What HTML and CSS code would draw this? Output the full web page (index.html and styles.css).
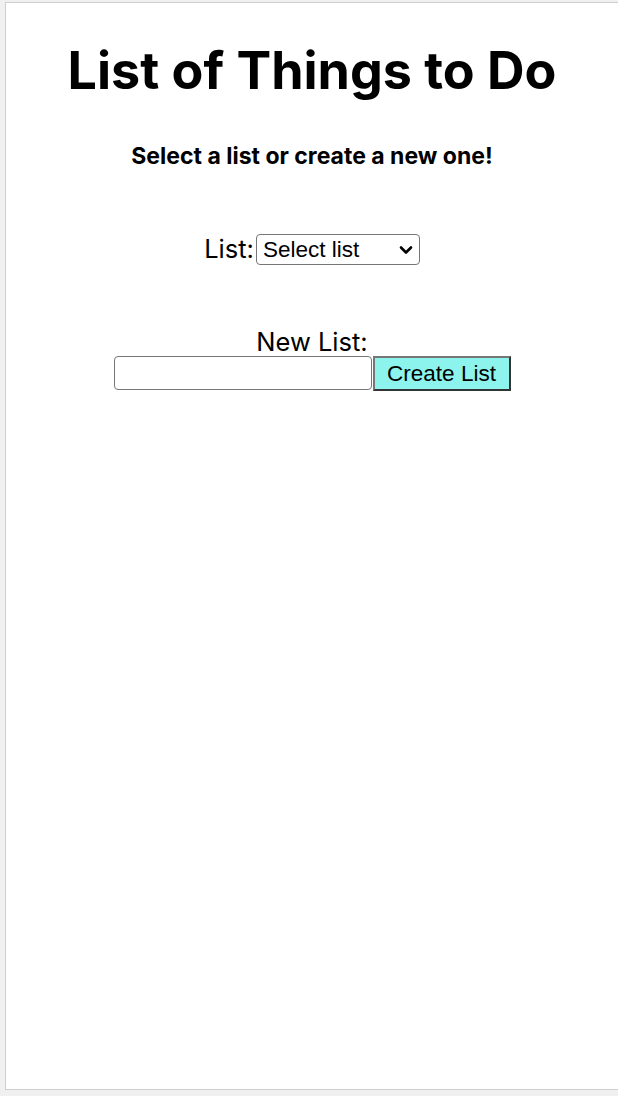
FILE: index.html
```html
<!DOCTYPE html>
<html>
<head>
<meta charset="utf-8">
<link rel="stylesheet" href="styles.css">
</head>
<body>
<div class="frame">
  <h1 class="title">List of Things to Do</h1>
  <h3 class="subtitle">Select a list or create a new one!</h3>
  <div class="row select-row">
    <label class="label" for="list">List:</label>
    <span class="select-wrap">
      <select id="list" class="select"><option>Select list</option></select>
      <svg class="chevron" width="14" height="10" viewBox="0 0 14 10" aria-hidden="true"><path d="M2 2.5 L7 7.5 L12 2.5" fill="none" stroke="#000" stroke-width="2.6" stroke-linecap="round" stroke-linejoin="round"/></svg>
    </span>
  </div>
  <div class="row new-row">
    <label class="label block" for="newlist">New List:</label>
    <div class="new-controls"><input id="newlist" class="input" type="text"><button class="button">Create List</button></div>
  </div>
</div>
</body>
</html>
```
FILE: styles.css
```css
html, body {
  margin: 0;
  padding: 0;
  background: #eff0ef;
}
body {
  padding: 2px 0 0 5px;
}
.frame {
  background: #ffffff;
  border: 1px solid #cfcfcf;
  border-right: none;
  height: 1088px;
  box-sizing: border-box;
  text-align: center;
  font-family: Inter, "Noto Sans", sans-serif;
  color: #000;
  padding-top: 37px;
}
.title {
  font-size: 52px;
  font-weight: 700;
  margin: 0;
  line-height: 1.21;
}
.subtitle {
  font-size: 23px;
  font-weight: 700;
  margin: 40px 0 0 0;
  line-height: 1.21;
}
.row {
  font-size: 25.5px;
}
.label {
  line-height: 1.12;
}
.select-row {
  margin-top: 63px;
  display: flex;
  justify-content: center;
  align-items: center;
  gap: 2px;
}
.select-wrap {
  position: relative;
  display: inline-block;
  height: 31px;
}
.select {
  appearance: none;
  -webkit-appearance: none;
  font-family: "Liberation Sans", Arial, sans-serif;
  font-size: 22.5px;
  width: 164px;
  height: 31px;
  margin: 0;
  padding: 0 0 0 6px;
  border: 1px solid #767676;
  border-radius: 4px;
  background: #fff;
  color: #000;
  text-align: left;
  display: block;
}
.chevron {
  position: absolute;
  right: 7px;
  top: 11px;
  pointer-events: none;
}
.new-row {
  margin-top: 63px;
}
.block {
  display: block;
}
.new-controls {
  display: flex;
  justify-content: center;
  align-items: flex-start;
  gap: 1px;
}
.input {
  width: 258px;
  height: 34px;
  box-sizing: border-box;
  border: 1px solid #767676;
  border-radius: 4px;
  font-size: 22px;
  margin: 0;
}
.button {
  font-family: "Liberation Sans", Arial, sans-serif;
  font-size: 22.5px;
  height: 35px;
  width: 138px;
  margin: 0;
  background: #8cf4ec;
  border: 2px solid;
  border-color: #767676 #333333 #333333 #767676;
  color: #000;
  padding: 0;
}
```
